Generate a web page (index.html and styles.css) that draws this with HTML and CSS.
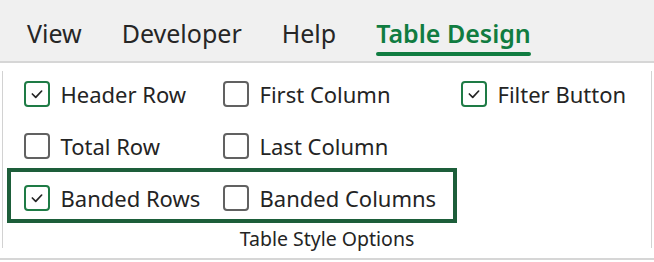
FILE: index.html
```html
<!DOCTYPE html>
<html lang="en">
<head>
    <meta charset="UTF-8">
    <title>Table Design</title>
    <link rel="stylesheet" href="styles.css">
</head>
<body>

<div class="tabs">
    <span class="tab">View</span>
    <span class="tab">Developer</span>
    <span class="tab">Help</span>
    <span class="tab active">Table Design</span>
</div>

<div class="group">
    <div class="options">
        <label class="option"><span class="box checked"><svg viewBox="0 0 26 26"><polyline points="7.5,13 11.5,17 18.5,9.5"/></svg></span>Header Row</label>
        <label class="option"><span class="box"></span>First Column</label>
        <label class="option"><span class="box checked"><svg viewBox="0 0 26 26"><polyline points="7.5,13 11.5,17 18.5,9.5"/></svg></span>Filter Button</label>

        <label class="option"><span class="box"></span>Total Row</label>
        <label class="option"><span class="box"></span>Last Column</label>
        <span></span>

        <label class="option"><span class="box checked"><svg viewBox="0 0 26 26"><polyline points="7.5,13 11.5,17 18.5,9.5"/></svg></span>Banded Rows</label>
        <label class="option"><span class="box"></span>Banded Columns</label>
        <span></span>
    </div>
    <div class="highlight"></div>
    <div class="group-label">Table Style Options</div>
</div>

<div class="bottom-line"></div>

</body>
</html>
```

FILE: styles.css
```css
body {
    margin: 0;
    width: 654px;
    height: 262px;
    background-color: #fff;
    font-family: "Noto Sans", "Open Sans", sans-serif;
    color: #242424;
    overflow: hidden;
}

/* ribbon tabs */
.tabs {
    height: 61px;
    background-color: #f0f0f0;
    border-bottom: 2px solid #d6d6d6;
    display: flex;
    gap: 40px;
    padding-left: 27px;
}

.tab {
    font-size: 25px;
    line-height: 24px;
    padding-top: 21px;
    height: 35px;
    color: #262626;
    position: relative;
}

.tab.active {
    color: #107c41;
    font-weight: 600;
}

.tab.active::after {
    content: "";
    position: absolute;
    left: 0;
    right: 0;
    bottom: 0;
    height: 4px;
    border-radius: 2px;
    background-color: #107c41;
}

/* group */
.group {
    position: relative;
    margin: 8px 2px 0 2px;
    height: 177px;
    border-left: 1.5px solid #d2d2d2;
    border-right: 1.5px solid #d2d2d2;
    padding-top: 3px;
    box-sizing: border-box;
}

.options {
    display: grid;
    grid-template-columns: 199px 238px auto;
    grid-auto-rows: 40px;
    row-gap: 12px;
    padding-left: 20.5px;
}

.option {
    display: flex;
    align-items: center;
    gap: 11px;
    font-size: 22px;
    white-space: nowrap;
}

.box {
    width: 26px;
    height: 26px;
    border: 2px solid #616161;
    border-radius: 4px;
    box-sizing: border-box;
    flex-shrink: 0;
    display: flex;
}

.box.checked {
    border-color: #1e7b45;
}

.box svg {
    width: 22px;
    height: 22px;
}

.box polyline {
    fill: none;
    stroke: #242424;
    stroke-width: 2;
    stroke-linecap: round;
    stroke-linejoin: round;
}

.highlight {
    position: absolute;
    left: 3.5px;
    top: 97px;
    width: 450px;
    height: 55px;
    border: 4px solid #1d5e3a;
    box-sizing: border-box;
}

.group-label {
    text-align: center;
    font-size: 19.5px;
    line-height: 24px;
    margin-top: 9px;
}

.bottom-line {
    margin-top: 10px;
    height: 2px;
    background-color: #d6d6d6;
}
```
